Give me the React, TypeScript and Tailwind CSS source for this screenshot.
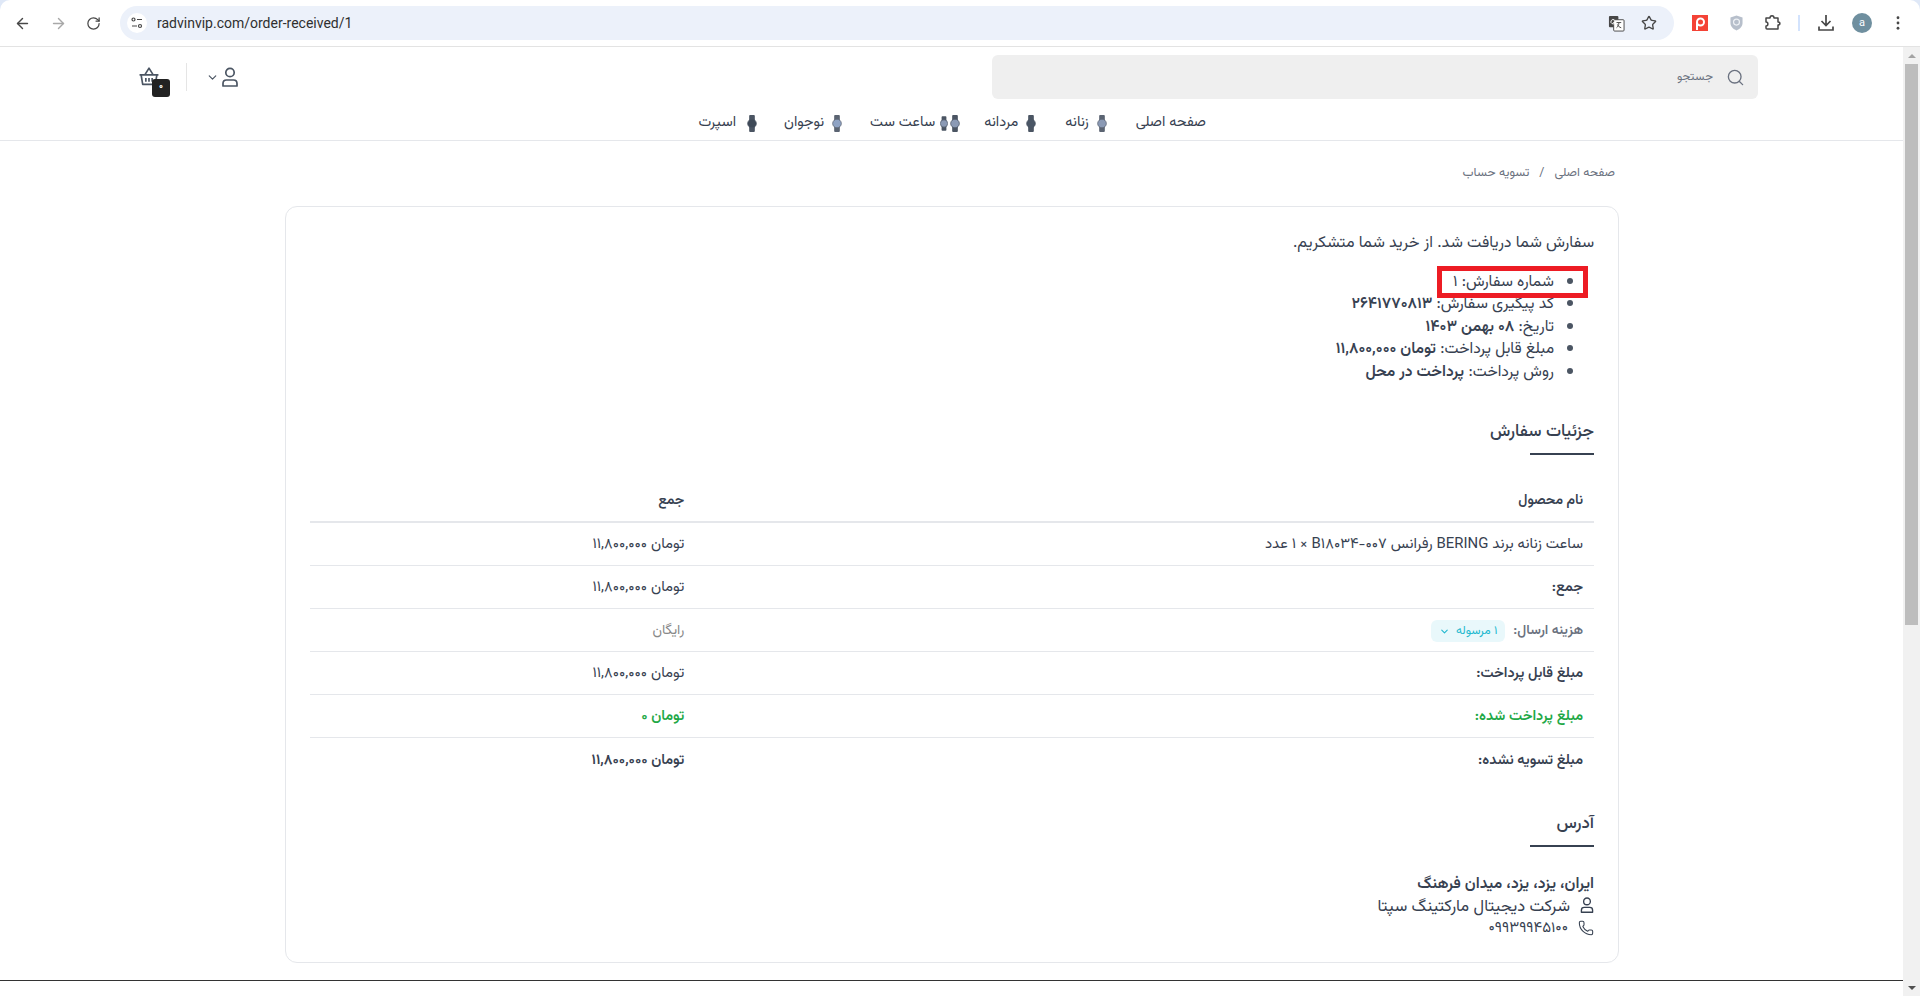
import React from 'react';
import { ArrowLeft, ArrowRight, RotateCw, Star, Search, ChevronDown, Phone } from 'lucide-react';

const FONT = "font-['Vazirmatn','DejaVu_Sans',sans-serif]";

const UserIcon = ({ className }: { className?: string }) => (
  <svg viewBox="0 0 16 20" fill="none" stroke="currentColor" strokeWidth="1.7" className={className}>
    <circle cx="8" cy="5.5" r="4.2" />
    <path d="M1 19v-2.5c0-2 1.5-3.5 3.5-3.5h7c2 0 3.5 1.500 3.5 3.500V19z" strokeLinejoin="round" />
  </svg>
);

const BasketIcon = ({ className }: { className?: string }) => (
  <svg viewBox="0 0 20 20" fill="none" stroke="currentColor" strokeWidth="1.6" className={className}>
    <path d="M1 8.500h18M2.500 8.500l1.500 9h12l1.500-9M6 8.500L10 2l4 6.500M7 11.500v3.500M10 11.500v3.500M13 11.500v3.500" strokeLinejoin="round" />
  </svg>
);

const WatchIcon = ({ face, strap, small }: { face: string; strap: string; small?: boolean }) => (
  <svg viewBox="0 0 10 18" className={small ? 'w-[8px] h-[15px]' : 'w-[10px] h-[17px]'}>
    <rect x="2" y="0" width="6" height="18" rx="1" fill={strap} />
    <circle cx="5" cy="9" r="4.600" fill={face} stroke={strap} strokeWidth="0.8" />
  </svg>
);

const NAV = [
  { label: 'صفحه اصلی', cls: '' },
  { label: 'زنانه', cls: 'mr-[29px] gap-[8px]', icons: [{ face: '#8b9ab5', strap: '#5b6472' }] },
  { label: 'مردانه', cls: 'mr-[29px] gap-[8px]', icons: [{ face: '#4a5666', strap: '#4b5563' }] },
  { label: 'ساعت ست', cls: 'mr-[24px] gap-[5px]', icons: [{ face: '#8b9ab5', strap: '#4b5563' }, { face: '#8b9ab5', strap: '#4b5563', small: true }] },
  { label: 'نوجوان', cls: 'mr-[28px] gap-[8px]', icons: [{ face: '#8fa3c4', strap: '#5b6472' }] },
  { label: 'اسپرت', cls: 'mr-[27px] gap-[11px]', icons: [{ face: '#3f4a58', strap: '#4b5563' }] },
];

const PRICE = 'تومان ۱۱,۸۰۰,۰۰۰';

const BULLET = "relative before:absolute before:content-[''] before:right-[-19px] before:top-[7px] before:w-[6px] before:h-[6px] before:rounded-full before:bg-[#4b5563]";

const Heading = ({ title }: { title: string }) => (
  <div className="flex flex-col">
    <h2 className="pt-[1px] text-[17px] leading-[24px] font-medium text-[#374151]">{title}</h2>
    <div className="mt-[9px] w-[64px] h-[2px] bg-[#374151]" />
  </div>
);

const Row = ({ label, value, className }: { label: React.ReactNode; value: React.ReactNode; className?: string }) => (
  <div className={`flex h-[43px] pt-[2px] items-center border-b border-[#e5e7eb] ${className ?? ''}`}>
    <div className="w-[70%] px-[11px]">{label}</div>
    <div className="w-[30%] px-[11px]">{value}</div>
  </div>
);

export default function App() {
  return (
    <div className={`h-[996px] w-[1920px] overflow-hidden flex flex-col bg-[#dfe8f7] ${FONT}`}>
      {/* browser toolbar */}
      <div className="h-[47px] shrink-0 flex items-center bg-white border-b border-[#e3e3e3] rounded-t-[10px] text-[#474747]" dir="ltr">
        <div className="flex items-center w-[120px] pl-[14px] gap-[19px]">
          <ArrowLeft size={17} />
          <ArrowRight size={17} className="text-[#a8a8a8]" />
          <RotateCw size={15} />
        </div>
        <div className="w-[1554px] h-[34px] rounded-full bg-[#ecf1fa] flex items-center pl-[7px] pr-[17px]">
          <div className="w-[20px] h-[20px] rounded-full bg-white flex items-center justify-center">
            <svg viewBox="0 0 12 12" className="w-[12px] h-[12px]" fill="none" stroke="#474747" strokeWidth="1.200">
              <circle cx="2.500" cy="2.500" r="1.500" />
              <path d="M6 2.500h5M1 9h5" />
              <circle cx="9" cy="9" r="1.500" />
            </svg>
          </div>
          <span className="ml-[10px] text-[14px] text-[#2f2f2f] font-['Roboto',sans-serif]">radvinvip.com/order-received/1</span>
          <div className="ml-auto flex items-center gap-[16px]">
            <svg viewBox="0 0 18 18" className="w-[17px] h-[17px]">
              <rect x="1" y="1" width="10" height="12" rx="1" fill="#474747" />
              <rect x="6" y="5" width="11" height="12" rx="1" fill="#fff" stroke="#474747" />
              <path d="M9 8h5M11.500 8c0 3-1 4.500-2.500 5.500M10 10c.5 1.500 2 3 4 3.500" stroke="#474747" fill="none" />
              <path d="M7 5.500a2.300 2.300 0 1 0 .5 2.500H5.500" stroke="#fff" fill="none" />
            </svg>
            <Star size={16} strokeWidth={2} />
          </div>
        </div>
        <div className="flex-1 flex items-center pl-[18px]">
          <div className="w-[16px] h-[16px] bg-[#f44336] flex items-center justify-center">
            <svg viewBox="0 0 16 16" className="w-[16px] h-[16px]" fill="none" stroke="#fff" strokeWidth="2">
              <circle cx="8.500" cy="7" r="3.500" />
              <path d="M5 7v8" />
            </svg>
          </div>
          <svg viewBox="0 0 14 16" className="ml-[22px] w-[13px] h-[16px]">
            <path d="M7 0l6.500 2v6c0 4-3 6.500-6.500 8C3.500 14.500.5 12 .5 8V2z" fill="#b7bfcb" />
            <circle cx="7" cy="7" r="3.200" fill="none" stroke="#eef1f5" strokeWidth="1.300" />
          </svg>
          <svg viewBox="0 0 16 16" className="ml-[22px] w-[16px] h-[16px]" fill="none" stroke="#474747" strokeWidth="1.500" strokeLinejoin="round">
            <path d="M1 3h4c0-3 4-3 4 0h4v4c2.500 0 2.500 3 0 3v4H2c-.5 0-1-.5-1-1v-2c2.500 0 2.500-4 0-4z" />
          </svg>
          <div className="ml-[17px] w-[2px] h-[16px] bg-[#d3e3fd]" />
          <svg viewBox="0 0 16 16" className="ml-[18px] w-[16px] h-[16px]" fill="none" stroke="#474747" strokeWidth="1.700">
            <path d="M8 0v10M3.500 6L8 10.500 12.500 6M1 11.500V15h14v-3.500" />
          </svg>
          <div className="ml-[18px] w-[20px] h-[20px] rounded-full bg-[#6f8f9f] flex items-center justify-center text-white text-[11px] font-['Roboto',sans-serif]">a</div>
          <svg viewBox="0 0 4 16" className="ml-[24px] w-[4px] h-[14px]" fill="#474747">
            <circle cx="2" cy="2" r="1.600" />
            <circle cx="2" cy="8" r="1.600" />
            <circle cx="2" cy="14" r="1.600" />
          </svg>
        </div>
      </div>

      <div className="flex-1 flex min-h-0 bg-white" dir="ltr">
        {/* page */}
        <div className="flex-1 min-w-0 flex flex-col relative" dir="rtl">
          <header className="h-[94px] shrink-0 border-b border-[#e5e7eb] flex flex-col">
            <div className="flex justify-between items-start pt-[8px] pr-[145px] pl-[138px]">
              <div className="w-[766px] h-[44px] rounded-[6px] bg-[#efefef] flex items-center pr-[13px] gap-[13px] text-[#6b7280]">
                <Search size={19} strokeWidth={1.700} />
                <span className="text-[12px]">جستجو</span>
              </div>
              <div className="flex items-center h-[44px] text-[#4b5563]" dir="ltr">
                <div className="relative w-[22px] h-[18px]">
                  <BasketIcon className="-mt-[2px] w-[22px] h-[21px]" />
                  <div className="absolute left-[14px] top-[11px] w-[18px] h-[18px] rounded-[3px] bg-[#222] text-white text-[9px] font-bold flex items-center justify-center">۰</div>
                </div>
                <div className="ml-[26px] w-px h-[28px] bg-[#e5e5e5]" />
                <ChevronDown size={13} strokeWidth={2.200} className="ml-[19px]" />
                <UserIcon className="ml-[2px] w-[18px] h-[20px]" />
              </div>
            </div>
            <nav className="flex-1 flex items-center pr-[697px] pt-[7px] text-[14.5px] text-[#374151]">
              {NAV.map((n) => (
                <div key={n.label} className={`flex items-center whitespace-nowrap ${n.cls}`}>
                  {n.icons && (
                    <span className="flex items-center gap-[2px]">
                      {n.icons.map((ic, i) => (
                        <WatchIcon key={i} {...ic} />
                      ))}
                    </span>
                  )}
                  <span>{n.label}</span>
                </div>
              ))}
            </nav>
          </header>

          <div className="flex items-center gap-[10px] h-[26px] mt-[19px] pr-[288px] text-[12.5px] text-[#6b7280]">
            <span>صفحه اصلی</span>
            <span>/</span>
            <span>تسویه حساب</span>
          </div>

          <main className="mt-[20px] mr-[284px] ml-[285px] h-[757px] shrink-0 rounded-[12px] border border-[#e5e7eb] bg-white px-[24px] pt-[26px] text-[15.7px] leading-[22.5px] text-[#374151]">
            <p className="text-[16px]">سفارش شما دریافت شد. از خرید شما متشکریم.</p>
            <ul className="list-none pr-[40px] mt-[15px]">
              <li className={BULLET}>شماره سفارش: ۱</li>
              <li className={BULLET}>
                کد پیگیری سفارش: <b className="font-semibold">۲۶۴۱۷۷۰۸۱۳</b>
              </li>
              <li className={BULLET}>
                تاریخ: <b className="font-semibold">۰۸ بهمن ۱۴۰۳</b>
              </li>
              <li className={BULLET}>
                مبلغ قابل پرداخت: <b className="font-semibold">{PRICE}</b>
              </li>
              <li className={BULLET}>
                روش پرداخت: <b className="font-semibold">پرداخت در محل</b>
              </li>
            </ul>

            <div className="mt-[36px]">
              <Heading title="جزئیات سفارش" />
            </div>

            <div className="mt-[24px] text-[14.9px] leading-[20px]">
              <div className="flex h-[44px] pt-[2px] items-center border-b-2 border-[#e5e7eb] font-semibold text-[14px]">
                <div className="w-[70%] px-[11px]">نام محصول</div>
                <div className="w-[30%] px-[11px]">جمع</div>
              </div>
              <Row label={'ساعت زنانه برند BERING رفرانس B۱۸۰۳۴-۰۰۷ \u200f×\u200f ۱ عدد'} value={PRICE} />
              <Row label={<b className="font-semibold text-[14.5px]">جمع:</b>} value={PRICE} />
              <Row
                label={
                  <div className="flex items-center gap-[8px]">
                    <b className="font-semibold text-[13.7px] text-[#6b7280]">هزینه ارسال:</b>
                    <span className="h-[22px] rounded-[6px] bg-[#e9f8fb] px-[8px] flex items-center gap-[6px] text-[12px] text-[#22b8cf]">
                      ۱ مرسوله
                      <ChevronDown size={11} strokeWidth={2.400} />
                    </span>
                  </div>
                }
                value={<span className="text-[14px] text-[#888]">رایگان</span>}
              />
              <Row label={<b className="font-semibold text-[14.5px]">مبلغ قابل پرداخت:</b>} value={PRICE} />
              <Row
                className="text-[#22a846]"
                label={<b className="font-semibold text-[14.5px]">مبلغ پرداخت شده:</b>}
                value={<b className="font-semibold text-[14.5px]">تومان ۰</b>}
              />
              <div className="flex h-[43px] pt-[2px] items-center">
                <div className="w-[70%] px-[11px] font-semibold text-[14.5px]">مبلغ تسویه نشده:</div>
                <div className="w-[30%] px-[11px] font-semibold text-[14.5px]">{PRICE}</div>
              </div>
            </div>

            <div className="mt-[30px]">
              <Heading title="آدرس" />
            </div>

            <address className="mt-[26px] not-italic">
              <div className="font-semibold">ایران، یزد، یزد، میدان فرهنگ</div>
              <div className="flex items-center gap-[10px] text-[16.5px]">
                <UserIcon className="-mt-[3px] w-[14px] h-[16px]" />
                <span>شرکت دیجیتال مارکتینگ سپتا</span>
              </div>
              <div className="flex items-center gap-[10px]">
                <Phone size={16} strokeWidth={1.600} className="-mt-[3px]" />
                <span className="text-[15px]">۰۹۹۳۹۹۴۵۱۰۰</span>
              </div>
            </address>
          </main>

          <footer className="mt-[17px] border-t border-[#333]" />

          {/* annotation drawn over the screenshot */}
          <div className="absolute left-[1437px] top-[219px] w-[151px] h-[32px] border-[5px] border-[#ed1c24]" />
        </div>

        {/* scrollbar */}
        <div className="w-[17px] shrink-0 bg-[#f1f1f1] flex flex-col items-center">
          <div className="h-[17px] flex items-center justify-center">
            <div className="border-x-[4px] border-x-transparent border-b-[4px] border-b-[#a3a3a3]" />
          </div>
          <div className="w-[13px] h-[561px] bg-[#bdbdbd]" />
          <div className="mt-auto h-[17px] flex items-center justify-center">
            <div className="border-x-[4px] border-x-transparent border-t-[4px] border-t-[#505050]" />
          </div>
        </div>
      </div>
    </div>
  );
}
